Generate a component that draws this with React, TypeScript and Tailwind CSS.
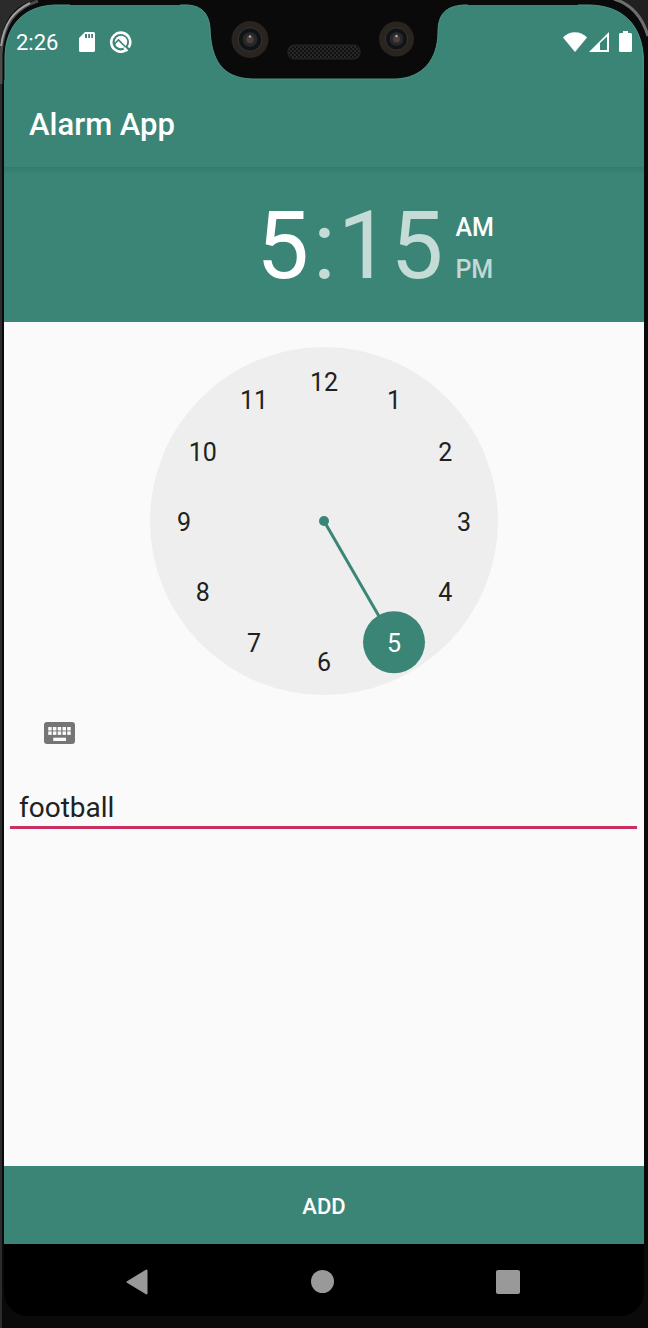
import { useState } from "react";

const HOURS = [12, 1, 2, 3, 4, 5, 6, 7, 8, 9, 10, 11];

function LeftCorner() {
  return (
    <svg className="absolute left-0 top-0" width="70" height="84" viewBox="0 0 70 84" aria-hidden="true">
      <path d="M0 0H70V5H55C24 6 6 25 5 56V80H0Z" fill="#0a0a0a" />
      <path d="M5 80V56C6 25 24 6 55 5H70" fill="none" stroke="#4a9585" strokeWidth="1" />
      <path d="M0 0H36C16 4 4 18 1 42H0Z" fill="#2b2b2b" />
      <path d="M1 84V54C3 24 15 8 38 1" fill="none" stroke="#4b4b4b" strokeWidth="3" />
      <path d="M1 46C4 24 13 11 30 3" fill="none" stroke="#a0a0a0" strokeWidth="2" />
    </svg>
  );
}

function RightCorner() {
  return (
    <svg className="absolute right-0 top-0" width="70" height="84" viewBox="0 0 70 84" aria-hidden="true">
      <path d="M0 0H70V82H66V58C64 26 46 6 12 5H0Z" fill="#0a0a0a" />
      <path d="M0 5H12C46 6 64 26 65 58V81" fill="none" stroke="#4a9585" strokeWidth="1" />
      <path d="M38 0H70V32C64 16 54 5 38 0Z" fill="#202020" />
      <path d="M36 -1C53 4 64 16 70 36" fill="none" stroke="#6e6e6e" strokeWidth="3" />
    </svg>
  );
}

function Camera({ cx, cy, r }: { cx: number; cy: number; r: number }) {
  return (
    <g>
      <circle cx={cx} cy={cy} r={r} fill="#2a241f" />
      <circle cx={cx} cy={cy} r={r * 0.64} fill="#121314" stroke="#33373a" strokeWidth="1" />
      <circle cx={cx} cy={cy} r={r * 0.42} fill="#26282b" stroke="#141414" strokeWidth="1" />
      <circle cx={cx} cy={cy} r={r * 0.2} fill="#4c3f3c" />
      <circle cx={cx} cy={cy - 3} r="1.2" fill="#b5b0ae" />
    </g>
  );
}

function Notch() {
  return (
    <svg
      className="absolute left-1/2 top-0 -translate-x-1/2"
      width="288"
      height="84"
      viewBox="180 0 288 84"
      aria-hidden="true"
    >
      <defs>
        <pattern id="mesh" width="4" height="4" patternUnits="userSpaceOnUse">
          <rect width="4" height="4" fill="#111" />
          <circle cx="1" cy="1" r="0.8" fill="#444" />
          <circle cx="3" cy="3" r="0.8" fill="#444" />
        </pattern>
      </defs>
      <path
        d="M180 5H188C202 6 209 14 210 28C211 60 222 78 252 79H396C422 78 438 60 438 32C438 14 446 6 464 5H468V0H180Z"
        fill="#0a0a0a"
      />
      <path
        d="M180 5H188C202 6 209 14 210 28C211 60 222 78 252 79H396C422 78 438 60 438 32C438 14 446 6 464 5H468"
        fill="none"
        stroke="#4a9585"
        strokeWidth="1"
      />
      <Camera cx={250} cy={39.5} r={18.5} />
      <Camera cx={396.5} cy={39} r={17.5} />
      <rect x="288" y="45" width="72" height="14" rx="6" fill="url(#mesh)" stroke="#262626" />
    </svg>
  );
}

function StatusBar() {
  return (
    <div className="flex h-[82px] items-center justify-between border-t-5 border-[#0a0a0a] px-3 pb-1 text-white">
      <div className="flex items-center">
        <span className="w-[63px] text-[22px] leading-6 pt-[2px]">2:26</span>
        <svg width="16" height="20" viewBox="0 0 16 20" aria-hidden="true">
          <path
            fillRule="evenodd"
            fill="#fff"
            d="M6 0H14.5Q16 0 16 1.500V18.500Q16 20 14.500 20H1.500Q0 20 0 18.500V6ZM6 2V6H8V2ZM9.200 2V6H11V2ZM12.200 2V6H14V2Z"
          />
        </svg>
        <svg className="ml-[15px]" width="22" height="22" viewBox="0 0 22 22" fill="none" aria-hidden="true">
          <path d="M18.600 16.500A9.500 9.500 0 1 0 15.800 19.200" stroke="#fff" strokeWidth="2.600" />
          <circle cx="11" cy="11" r="6.200" fill="#fff" />
          <path d="M4 13.500L8.500 9L19.500 20" stroke="#3b8577" strokeWidth="1.600" />
          <path d="M14 16.500L17.500 20" stroke="#fff" strokeWidth="2" />
        </svg>
      </div>
      <div className="flex items-center">
        <svg width="24" height="20" viewBox="0 0 24 20" aria-hidden="true">
          <path d="M0 5.500C6.500-1.500 17.500-1.500 24 5.500L12 20Z" fill="#fff" />
        </svg>
        <svg className="ml-[2px]" width="20" height="20" viewBox="0 0 20 20" aria-hidden="true">
          <path fillRule="evenodd" fill="#fff" d="M0 20L20 0V20ZM11 11V18H18V4.500Z" />
        </svg>
        <svg className="ml-[10px]" width="13" height="21" viewBox="0 0 13 21" aria-hidden="true">
          <path d="M4 0H9V2H11.500Q13 2 13 3.500V19.500Q13 21 11.500 21H1.500Q0 21 0 19.500V3.500Q0 2 1.500 2H4Z" fill="#fff" />
        </svg>
      </div>
    </div>
  );
}

function ClockFace({ hour, onPick }: { hour: number; onPick: (h: number) => void }) {
  const angle = (hour * Math.PI) / 6;
  const hx = 174 + Math.sin(angle) * 140;
  const hy = 174 - Math.cos(angle) * 140;
  return (
    <div className="relative mx-auto size-[348px] rounded-full bg-[#eeeeee]">
      <svg className="block size-full" viewBox="0 0 348 348" aria-hidden="true">
        <line x1="174" y1="174" x2={hx} y2={hy} stroke="#3b8577" strokeWidth="3" />
        <circle cx="174" cy="174" r="5" fill="#3b8577" />
        <circle cx={hx} cy={hy} r="31" fill="#3b8577" />
      </svg>
      {HOURS.map((h) => {
        const a = (h * Math.PI) / 6;
        return (
          <button
            key={h}
            type="button"
            onClick={() => onPick(h)}
            className={
              "absolute flex size-12 -translate-x-1/2 -translate-y-1/2 items-center justify-center rounded-full pt-[3px] text-[25px] leading-8 " +
              (h === hour ? "text-white" : "text-[#212121]")
            }
            style={{ left: 174 + Math.sin(a) * 140, top: 174 - Math.cos(a) * 140 }}
          >
            {h}
          </button>
        );
      })}
    </div>
  );
}

function KeyboardIcon() {
  const cols = [4.2, 8.9, 13.7, 18.5, 23.2];
  return (
    <svg width="31" height="22" viewBox="0 0 31 22" aria-hidden="true">
      <rect width="31" height="22" rx="3" fill="#757575" />
      {cols.map((x) => (
        <g key={x} fill="#fafafa">
          <rect x={x} y="5" width="3.500" height="3.500" />
          <rect x={x} y="9.400" width="3.500" height="3.500" />
        </g>
      ))}
      <rect x="9.200" y="15.700" width="12.800" height="3.300" fill="#fafafa" />
    </svg>
  );
}

export default function App() {
  const [hour, setHour] = useState(5);
  const [period, setPeriod] = useState("AM");
  const [label, setLabel] = useState("football");

  return (
    <div className="relative flex min-h-screen flex-col border-l-2 border-[#2c2c2e] bg-[#0a0a0a] pb-3 pl-[2px] pr-1 font-[Roboto,sans-serif]">
      <header className="bg-[#3b8577]">
        <StatusBar />
        <h1 className="flex h-[85px] items-center px-[25px] pt-px text-[31px] font-medium leading-10 text-white">Alarm App</h1>
      </header>

      <section className="flex h-[155px] justify-center bg-linear-to-b from-[#357a6d] to-[#3b8577] to-5% pl-[102px] pt-[2px]">
        <div className="flex items-center text-[94px] leading-none text-white/70">
          <button type="button" className="text-white">{hour}</button>
          <span className="ml-1 mr-[2px]">:</span>
          <button type="button">15</button>
        </div>
        <div className="ml-3 flex flex-col justify-center gap-[10px] pt-[6px] text-[25px] font-medium leading-8">
          {["AM", "PM"].map((p) => (
            <button
              key={p}
              type="button"
              onClick={() => setPeriod(p)}
              className={p === period ? "text-left text-white" : "text-left text-white/70"}
            >
              {p}
            </button>
          ))}
        </div>
      </section>

      <main className="flex-1 bg-[#fafafa] pt-[25px]">
        <ClockFace hour={hour} onPick={setHour} />
        <button type="button" aria-label="Switch to text input" className="ml-10 mt-[27px] block">
          <KeyboardIcon />
        </button>
        <div className="mt-11 pl-[6px] pr-[7px]">
          <input
            aria-label="Alarm name"
            value={label}
            onChange={(e) => setLabel(e.target.value)}
            className="block h-[41px] w-full border-b-3 border-[#c9305f] bg-transparent px-[9px] text-[28px] leading-8 text-[#212121] outline-none"
          />
        </div>
      </main>

      <button type="button" className="h-[78px] bg-[#3b8577] pt-[3px] text-[22px] font-medium leading-8 text-white">
        ADD
      </button>

      <nav className="flex h-[72px] items-center justify-between rounded-b-3xl bg-black pl-[122px] pr-[124px] pt-[3px]">
        <button type="button" aria-label="Back">
          <svg className="block" width="22" height="26" viewBox="0 0 22 26" aria-hidden="true">
            <path d="M20.500 1.500V24.500L1.500 13Z" fill="#999" stroke="#999" strokeWidth="2" strokeLinejoin="round" />
          </svg>
        </button>
        <button type="button" aria-label="Home" className="size-[23px] rounded-full bg-[#999]" />
        <button type="button" aria-label="Recent apps" className="size-6 rounded-xs bg-[#999]" />
      </nav>

      <div className="pointer-events-none absolute -left-[2px] right-0 top-0 h-[84px]">
        <LeftCorner />
        <Notch />
        <RightCorner />
      </div>
    </div>
  );
}
